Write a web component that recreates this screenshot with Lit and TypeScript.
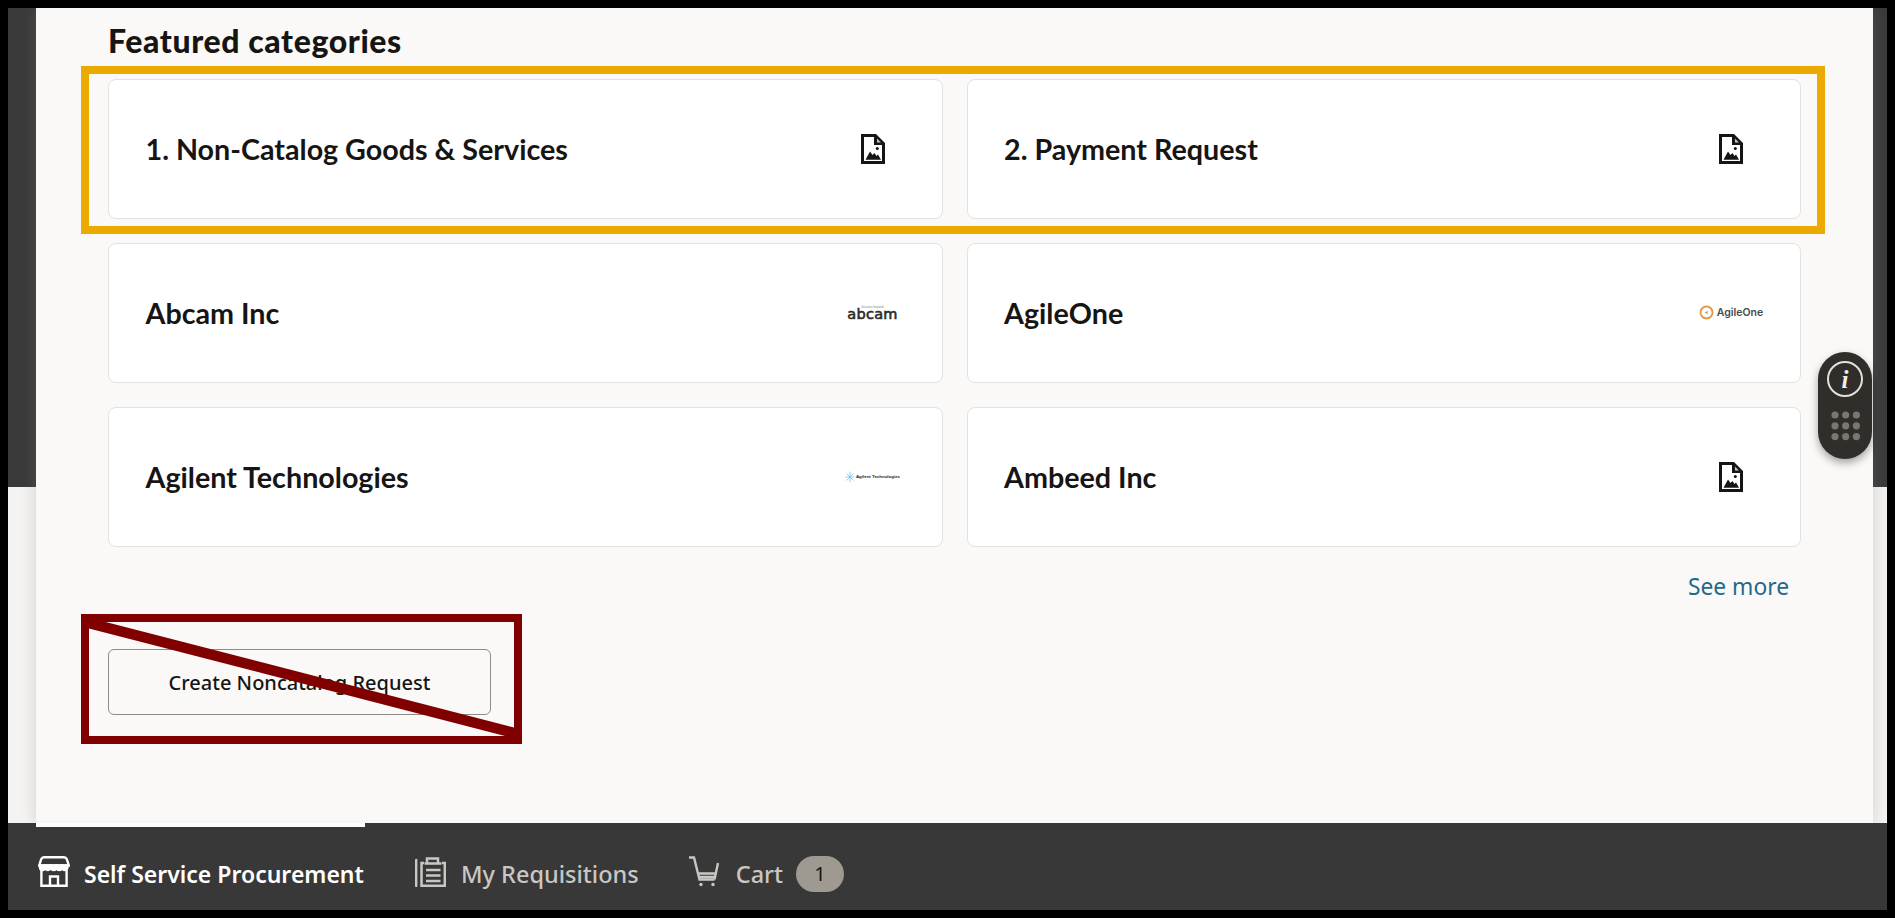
import { LitElement, html, css, svg } from "lit";
import { customElement } from "lit/decorators.js";

const docIcon = html`<svg class="doc" width="24" height="30" viewBox="0 0 24 30">
  <path fill="#161513" fill-rule="evenodd" d="M0 0H15L24 9V30H0ZM3 3V27H21V11H13V3Z"/>
  <path fill="#fff" d="M16 4.5L20 8.5H16Z" opacity=".75"/>
  <circle cx="16.3" cy="14.6" r="1.5" fill="#161513"/>
  <path fill="#161513" d="M4.5 25.8L9 17.5L11.5 21L13.5 19L15.5 22L17 20.5L20 25.8Z"/>
</svg>`;

const abcam = html`<div class="abcam"><span class="abtag">discover beyond</span><span class="abname">abcam</span></div>`;
const agile = html`<div class="agile"><svg width="15" height="15" viewBox="0 0 15 15"><circle cx="7.5" cy="7.5" r="6" fill="none" stroke="#e8963f" stroke-width="1.8"/><path d="M5.6 7.5L8.6 5.8V9.2Z" fill="#e8963f"/></svg><span>AgileOne</span></div>`;
const agilent = html`<div class="agilent"><svg width="10" height="12" viewBox="0 0 12 14" stroke="#6fc3ea" stroke-width=".9"><path d="M6 0.5V13.5M0.5 7H11.5M1.8 2.8L10.2 11.2M10.2 2.8L1.8 11.2"/></svg><span>Agilent Technologies</span></div>`;

const cards = [
  { name: "1. Non-Catalog Goods & Services", logo: docIcon },
  { name: "2. Payment Request", logo: docIcon },
  { name: "Abcam Inc", logo: abcam },
  { name: "AgileOne", logo: agile },
  { name: "Agilent Technologies", logo: agilent },
  { name: "Ambeed Inc", logo: docIcon },
];

const dots = [0, 1, 2].flatMap((r) => [0, 1, 2].map((c) => svg`<circle cx=${4 + c * 10.7} cy=${4 + r * 10.8} r="3.6" fill="#7a7672"/>`));
const scallops = [0, 1, 2, 3, 4].map((i) => svg`<path d="M${2 + i * 5.6} 9.5H${7 + i * 5.6}V11.5A2.5 2.5 0 0 1 ${2 + i * 5.6} 11.5Z" fill="#fff"/>`);

@customElement("app-root")
export class AppRoot extends LitElement {
  static styles = css`
    :host { display: block; width: 1895px; height: 918px; overflow: hidden; font-family: "Noto Sans", sans-serif; color: #161513; }
    .frame { box-sizing: border-box; width: 100%; height: 100%; border: 8px solid #000; display: flex; flex-direction: column; position: relative; }
    .stage { flex: 1; min-height: 0; display: flex; overflow: hidden; padding: 0 14px 0 28px; background: linear-gradient(#3a3a3a 0 479px, #f4f3f1 479px); }
    .panel { flex: 1; box-sizing: border-box; background: #faf9f7; padding: 11px 72px 0 72px; box-shadow: 0 0 14px rgba(128,128,128,.3); }
    h2 { margin: 0 0 16px; font: 900 32px/44px "Lato", sans-serif; letter-spacing: .6px; }
    .grid { display: grid; grid-template-columns: 1fr 1fr; gap: 24px; }
    .card { box-sizing: border-box; height: 140px; background: #fff; border: 1px solid #e4e2df; border-radius: 8px; display: flex; align-items: center; justify-content: space-between; padding: 0 37px 0 36.5px; }
    .name { font: 700 28.7px/36px "Lato", sans-serif; }
    .logo { width: 64px; display: flex; justify-content: center; align-items: center; }
    .abcam { display: flex; flex-direction: column; align-items: center; position: relative; top: -1px; }
    .abtag { font: 3px/3px "Liberation Sans", sans-serif; color: #888; white-space: nowrap; }
    .abname { font: 400 14.5px/10px "DejaVu Sans", sans-serif; letter-spacing: .3px; color: #2a2a2a; -webkit-text-stroke: .6px #2a2a2a; }
    .agile { display: flex; align-items: center; gap: 3px; white-space: nowrap; font: 600 10.5px/15px "Inter", sans-serif; color: #4a4a4a; position: relative; top: -1px; }
    .agilent { display: flex; align-items: center; gap: 1px; white-space: nowrap; font: 700 4.4px/12px "Liberation Sans", sans-serif; color: #222; }
    .more { display: flex; justify-content: flex-end; padding: 20px 12px 0 0; }
    .more a { font-size: 22.8px; line-height: 40px; color: #1f6a8c; }
    .btn { box-sizing: border-box; display: block; margin-top: 42px; width: 383px; height: 66px; background: transparent; border: 1px solid #8f8c88; border-radius: 6px; font: 500 20px "Noto Sans", sans-serif; color: #161513; }
    nav { height: 87px; flex: none; background: #383838; display: flex; padding-left: 28px; position: relative; }
    .tab { box-sizing: border-box; display: flex; align-items: center; gap: 13px; height: 87px; color: #c9c7c4; font-size: 23.5px; font-weight: 500; padding-top: 14px; white-space: nowrap; }
    .tab svg { flex: none; position: relative; top: -2px; }
    .tab.active { color: #fff; width: 329px; border-top: 4px solid #fff; padding-top: 10px; padding-left: 2px; font-size: 23px; font-weight: 600; gap: 14px; }
    .tab.reqs { margin-left: 50px; gap: 15px; }
    .tab.cart { margin-left: 50px; gap: 16px; }
    .badge { display: block; width: 48px; height: 36px; border-radius: 18px; background: #9e9991; color: #161513; font-size: 20px; line-height: 36px; text-align: center; font-weight: 400; margin-left: -3px; }
    .gold, .red { position: absolute; box-sizing: border-box; border: 8px solid; }
    .gold { left: 73px; top: 58px; width: 1744px; height: 168px; border-color: #eaaa00; }
    .red { left: 73px; top: 606px; width: 441px; height: 130px; border-color: #800000; }
    .red svg { display: block; }
    .pill { position: absolute; left: 1810px; top: 344px; width: 54px; height: 107px; border-radius: 27px; background: #312d2a; box-shadow: 0 4px 8px rgba(0,0,0,.35); display: flex; flex-direction: column; align-items: center; }
    .info { box-sizing: border-box; margin-top: 9px; width: 36px; height: 36px; border: 2.5px solid #e4e1dc; border-radius: 50%; display: flex; align-items: center; justify-content: center; color: #f0eeea; font: italic 700 25px/1 "Liberation Serif", serif; }
    .dots { margin-top: 14px; margin-left: 1px; display: block; }
  `;

  render() {
    return html`<div class="frame">
      <div class="stage">
        <main class="panel">
          <h2>Featured categories</h2>
          <div class="grid">
            ${cards.map((c) => html`<div class="card"><span class="name">${c.name}</span><div class="logo">${c.logo}</div></div>`)}
          </div>
          <div class="more"><a>See more</a></div>
          <button class="btn">Create Noncatalog Request</button>
        </main>
      </div>
      <nav>
        <div class="tab active">
          <svg width="32" height="31" viewBox="0 0 32 31" fill="none" stroke="#fff" stroke-width="2.4">
            <path d="M6 1.2H26C27.5 1.2 28.3 2 28.8 3.2L30.8 9.5H1.2L3.2 3.2C3.7 2 4.5 1.2 6 1.2Z"/>
            ${scallops}
            <path d="M3.4 14V29.8H28.6V14M12 29.8V20.5H20V29.8"/>
          </svg>
          <span>Self Service Procurement</span>
        </div>
        <div class="tab reqs">
          <svg width="31" height="30" viewBox="0 0 31 30" fill="none" stroke="#c9c7c4">
            <path d="M1.2 3V29" stroke-width="2.4" stroke-linecap="round"/>
            <path d="M9 6H6.5V28.8H29.8V6H27" stroke-width="2.5"/>
            <path d="M12 6V1.5H23V6" stroke-width="2.5"/>
            <path d="M9.5 6.5H26.5M11 13H25.5M11 18.5H25.5M11 24H25.5" stroke-width="2.6"/>
          </svg>
          <span>My Requisitions</span>
        </div>
        <div class="tab cart">
          <svg width="31" height="31" viewBox="0 0 31 31" fill="none" stroke="#c9c7c4" stroke-width="2.4">
            <path d="M0 1.5H5L10.5 23.5H25.5"/>
            <path d="M29 7L25.5 23.5M8.5 17.5H27M9.5 21H26.5"/>
            <circle cx="12" cy="28.5" r="1.7" fill="#c9c7c4" stroke="none"/><circle cx="24" cy="28.5" r="1.7" fill="#c9c7c4" stroke="none"/>
          </svg>
          <span>Cart</span>
          <span class="badge">1</span>
        </div>
      </nav>
      <div class="gold"></div>
      <div class="red"><svg width="425" height="114" viewBox="0 0 425 114"><path d="M-4 0L429 112" stroke="#800000" stroke-width="10.4"/></svg></div>
      <div class="pill">
        <div class="info">i</div>
        <svg class="dots" width="30" height="30" viewBox="0 0 30 30">${dots}</svg>
      </div>
    </div>`;
  }
}
